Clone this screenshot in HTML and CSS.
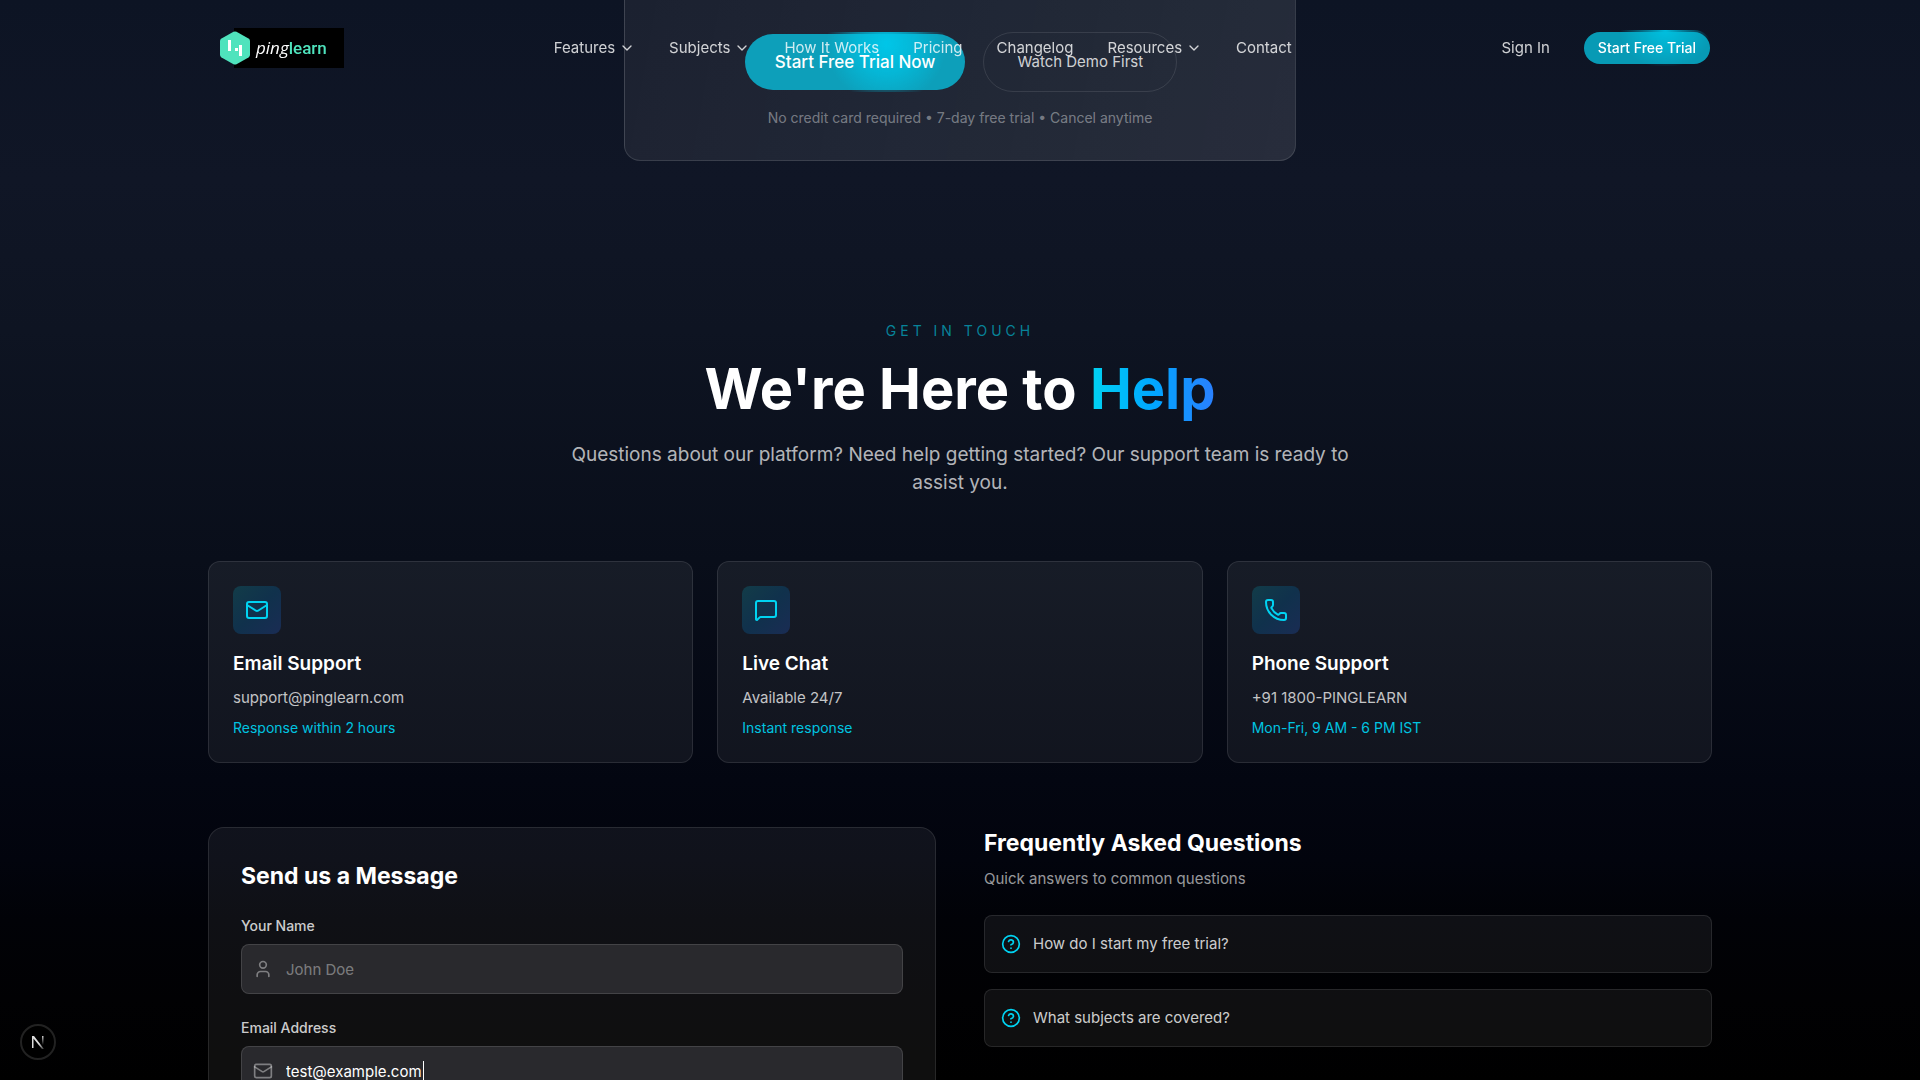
FILE: index.html
```html
<!DOCTYPE html>
<html lang="en">
<head>
<meta charset="utf-8">
<meta name="viewport" content="width=device-width, initial-scale=1">
<title>PingLearn</title>
<link rel="stylesheet" href="styles.css">
</head>
<body>
<header class="header">
  <div class="header-inner">
    <a class="logo" href="#" aria-label="PingLearn home">
      <svg class="logo-mark" viewBox="0 0 30 34" aria-hidden="true">
        <path d="M13.500.8Q15 0 16.500.8L28.500 7.600Q30 8.500 30 10V24Q30 25.500 28.500 26.400L16.500 33.200Q15 34 13.500 33.200L1.500 26.400Q0 25.500 0 24V10Q0 8.500 1.500 7.600Z" fill="#4fe3bd"/>
        <path d="M8 9h3v11h-3zM19 14h3v11h-3zM15 17h3v3h-3z" fill="#fff"/>
      </svg>
      <span class="logo-words"><span class="logo-ping">ping</span><span class="logo-learn">learn</span></span>
    </a>
    <nav class="nav" aria-label="Main">
      <a href="#">Features <svg class="icon chevron" viewBox="0 0 24 24" aria-hidden="true"><path d="m6 9 6 6 6-6"/></svg></a>
      <a href="#">Subjects <svg class="icon chevron" viewBox="0 0 24 24" aria-hidden="true"><path d="m6 9 6 6 6-6"/></svg></a>
      <a href="#">How It Works</a>
      <a href="#">Pricing</a>
      <a href="#">Changelog</a>
      <a href="#">Resources <svg class="icon chevron" viewBox="0 0 24 24" aria-hidden="true"><path d="m6 9 6 6 6-6"/></svg></a>
      <a href="#">Contact</a>
    </nav>
    <div class="account">
      <a class="sign-in" href="#">Sign In</a>
      <button class="btn btn-primary btn-small" type="button">Start Free Trial</button>
    </div>
  </div>
</header>

<main>
  <section class="cta">
    <div class="cta-card">
      <div class="cta-actions">
        <button class="btn btn-primary btn-large" type="button">Start Free Trial Now</button>
        <button class="btn btn-outline" type="button">Watch Demo First</button>
      </div>
      <p class="cta-note">No credit card required • 7-day free trial • Cancel anytime</p>
    </div>
  </section>

  <section class="contact">
    <div class="intro">
      <p class="eyebrow">GET IN TOUCH</p>
      <h1>We're Here to <span class="accent">Help</span></h1>
      <p class="lead">Questions about our platform? Need help getting started? Our support team is ready to assist you.</p>
    </div>

    <div class="channels">
      <article class="channel">
        <span class="channel-icon"><svg class="icon" viewBox="0 0 24 24" aria-hidden="true"><rect x="2" y="4" width="20" height="16" rx="2"/><path d="m22 7-8.991 5.727a2 2 0 0 1-2.009 0L2 7"/></svg></span>
        <h3>Email Support</h3>
        <p>support@pinglearn.com</p>
        <p class="channel-note">Response within 2 hours</p>
      </article>
      <article class="channel">
        <span class="channel-icon"><svg class="icon" viewBox="0 0 24 24" aria-hidden="true"><path d="M22 17a2 2 0 0 1-2 2H6.828a2 2 0 0 0-1.414.586l-2.202 2.202A.71.71 0 0 1 2 21.286V5a2 2 0 0 1 2-2h16a2 2 0 0 1 2 2z"/></svg></span>
        <h3>Live Chat</h3>
        <p>Available 24/7</p>
        <p class="channel-note">Instant response</p>
      </article>
      <article class="channel">
        <span class="channel-icon"><svg class="icon" viewBox="0 0 24 24" aria-hidden="true"><path d="M13.832 16.568a1 1 0 0 0 1.213-.303l.355-.465A2 2 0 0 1 17 15h3a2 2 0 0 1 2 2v3a2 2 0 0 1-2 2A18 18 0 0 1 2 4a2 2 0 0 1 2-2h3a2 2 0 0 1 2 2v3a2 2 0 0 1-.8 1.600l-.468.351a1 1 0 0 0-.292 1.233 14 14 0 0 0 6.392 6.384"/></svg></span>
        <h3>Phone Support</h3>
        <p>+91 1800-PINGLEARN</p>
        <p class="channel-note">Mon-Fri, 9 AM - 6 PM IST</p>
      </article>
    </div>

    <div class="columns">
      <form class="message">
        <h2>Send us a Message</h2>
        <div class="field">
          <label for="name">Your Name</label>
          <div class="control">
            <svg class="icon control-icon" viewBox="0 0 24 24" aria-hidden="true"><path d="M19 21v-2a4 4 0 0 0-4-4H9a4 4 0 0 0-4 4v2"/><circle cx="12" cy="7" r="4"/></svg>
            <input id="name" type="text" placeholder="John Doe">
          </div>
        </div>
        <div class="field">
          <label for="email">Email Address</label>
          <div class="control">
            <svg class="icon control-icon" viewBox="0 0 24 24" aria-hidden="true"><rect x="2" y="4" width="20" height="16" rx="2"/><path d="m22 7-8.991 5.727a2 2 0 0 1-2.009 0L2 7"/></svg>
            <input id="email" type="email" value="test@example.com">
            <span class="caret"></span>
          </div>
        </div>
      </form>

      <div class="faq">
        <h2>Frequently Asked Questions</h2>
        <p class="faq-lead">Quick answers to common questions</p>
        <div class="faq-list">
          <button class="question" type="button"><svg class="icon" viewBox="0 0 24 24" aria-hidden="true"><circle cx="12" cy="12" r="10"/><path d="M9.090 9a3 3 0 0 1 5.830 1c0 2-3 3-3 3"/><path d="M12 17h.01"/></svg>How do I start my free trial?</button>
          <button class="question" type="button"><svg class="icon" viewBox="0 0 24 24" aria-hidden="true"><circle cx="12" cy="12" r="10"/><path d="M9.090 9a3 3 0 0 1 5.830 1c0 2-3 3-3 3"/><path d="M12 17h.01"/></svg>What subjects are covered?</button>
        </div>
      </div>
    </div>
  </section>
</main>

<button class="dev-badge" type="button" aria-label="Developer tools">
  <svg viewBox="0 0 12 14" aria-hidden="true">
    <defs>
      <linearGradient id="diag" x1="0" y1="0" x2="1" y2="1"><stop offset=".6" stop-color="#ddd"/><stop offset="1" stop-color="#ddd" stop-opacity=".2"/></linearGradient>
      <linearGradient id="stem" x1="0" y1="0" x2="0" y2="1"><stop offset="0" stop-color="#ccc"/><stop offset="1" stop-color="#ccc" stop-opacity="0"/></linearGradient>
    </defs>
    <path d="M0 13V1h2l10 13h-2L1.500 3.500V13z" fill="url(#diag)"/>
    <rect x="10" y="1" width="1.500" height="9" fill="url(#stem)"/>
  </svg>
</button>
</body>
</html>
```
FILE: styles.css
```css
* { box-sizing: border-box; }

body {
  margin: 0;
  min-height: 100vh;
  font-family: Inter, "Open Sans", sans-serif;
  font-size: 15px;
  line-height: 24px;
  color: #fff;
  background: #000 linear-gradient(180deg, #0d1424 0, #101626 180px, #0e1422 330px, #090e1a 560px, #030611 780px, #02040d 860px, #010207 920px, #010103 1000px, #000 1080px) no-repeat;
}

h1, h2, h3, p { margin: 0; }
a { color: inherit; text-decoration: none; }
button, input { font: inherit; color: inherit; }

.icon {
  width: 24px;
  height: 24px;
  flex: none;
  fill: none;
  stroke: currentColor;
  stroke-width: 2;
  stroke-linecap: round;
  stroke-linejoin: round;
}

/* Header */
.header {
  position: fixed;
  top: 0;
  left: 0;
  right: 0;
  z-index: 10;
}
.header-inner {
  display: flex;
  align-items: center;
  justify-content: space-between;
  max-width: 1536px;
  height: 96px;
  margin: 0 auto;
  padding: 0 16px 0 28px;
}
.logo {
  display: flex;
  align-items: center;
  height: 40px;
  background: linear-gradient(#000, #000) 14px 0 no-repeat;
}
.logo-mark { width: 30px; height: 34px; }
.logo-words {
  display: flex;
  align-items: baseline;
  width: 94px;
  padding-left: 6px;
}
.logo-ping {
  font-family: "Open Sans", sans-serif;
  font-size: 17px;
  font-style: italic;
}
.logo-learn {
  font-family: "Liberation Sans Narrow", Roboto, sans-serif;
  font-size: 17px;
  font-weight: 500;
  color: #4fe3bd;
}
.nav { display: flex; gap: 34px; color: rgba(255, 255, 255, .8); }
.nav a { display: flex; align-items: center; gap: 4px; }
.chevron { width: 16px; height: 16px; }
.account { display: flex; align-items: center; gap: 32px; }
.sign-in { color: rgba(255, 255, 255, .8); }

/* Buttons */
.btn {
  border-radius: 30px;
  cursor: pointer;
  white-space: nowrap;
}
.btn-primary {
  border: 2px solid transparent;
  font-weight: 500;
  background:
    radial-gradient(circle at 64% 20%, #00c6e8, rgba(0, 198, 232, .6) 30px, rgba(0, 198, 232, 0) 60px) border-box,
    linear-gradient(#0d9fba, #0d9fba) padding-box;
}
.btn-small {
  height: 36px;
  padding: 0 14px;
  font-size: 14px;
  background:
    radial-gradient(ellipse 46px 38px at 64% 0, #00c0e0, rgba(0, 192, 224, 0)) border-box,
    linear-gradient(#079ab5, #079ab5) padding-box;
}
.btn-large {
  height: 60px;
  padding: 0 30px;
  font-size: 17px;
}
.btn-outline {
  height: 60px;
  padding: 0 33px;
  border: 1px solid rgba(255, 255, 255, .1);
  background: transparent;
  color: rgba(255, 255, 255, .8);
}

/* Call to action */
.cta { padding: 0 24px; }
.cta-card {
  display: flex;
  flex-direction: column;
  align-items: center;
  gap: 16px;
  max-width: 672px;
  margin: 0 auto;
  padding: 32px;
  border: 1px solid rgba(255, 255, 255, .12);
  border-top: 0;
  border-radius: 0 0 16px 16px;
  background: linear-gradient(100deg, rgba(255, 255, 255, .06), rgba(255, 255, 255, .1));
}
.cta-actions { display: flex; gap: 16px; }
.cta-note { font-size: 14px; line-height: 20px; color: rgba(255, 255, 255, .4); }

/* Contact */
.contact {
  max-width: 1552px;
  margin: 0 auto;
  padding: 160px 24px 96px;
}
.intro {
  max-width: 800px;
  margin: 0 auto 64px;
  text-align: center;
}
.eyebrow {
  font-size: 14px;
  line-height: 20px;
  letter-spacing: 4px;
  color: #078399;
}
h1 {
  margin: 16px 0 20px;
  font-size: 56px;
  line-height: 64px;
  font-weight: 700;
}
.accent {
  display: inline-block;
  color: transparent;
  background: linear-gradient(90deg, #00d3f2, #00a6ff 50%, #2b7fff);
  background-clip: text;
  -webkit-background-clip: text;
}
.lead { font-size: 19px; line-height: 28px; color: rgba(255, 255, 255, .7); }

.channels {
  display: grid;
  grid-template-columns: repeat(3, 1fr);
  gap: 24px;
  margin-bottom: 64px;
}
.channel {
  padding: 24px;
  border: 1px solid rgba(255, 255, 255, .1);
  border-radius: 12px;
  background: rgba(255, 255, 255, .06);
  color: rgba(255, 255, 255, .75);
}
.channel-icon {
  display: grid;
  place-items: center;
  width: 48px;
  height: 48px;
  margin-bottom: 16px;
  border-radius: 8px;
  background: linear-gradient(135deg, #123c48, #10314c 50%, #1a2c54);
  color: #00d3f2;
}
.channel h3 {
  margin-bottom: 8px;
  font-size: 19px;
  line-height: 28px;
  font-weight: 600;
  color: #fff;
}
.channel .channel-note {
  margin-top: 8px;
  font-size: 14px;
  line-height: 20px;
  color: #00c4e0;
}

.columns {
  display: grid;
  grid-template-columns: repeat(2, 1fr);
  gap: 48px;
}
h2 { font-size: 23px; line-height: 32px; font-weight: 700; }

.message {
  display: flex;
  flex-direction: column;
  gap: 24px;
  padding: 32px;
  border: 1px solid rgba(255, 255, 255, .1);
  border-radius: 16px;
  background: rgba(255, 255, 255, .06);
}
.field { display: grid; gap: 8px; }
.field label {
  font-size: 14px;
  line-height: 20px;
  font-weight: 500;
  color: rgba(255, 255, 255, .8);
}
.control { display: grid; align-items: center; }
.control > * { grid-area: 1 / 1; }
.control-icon {
  z-index: 1;
  width: 20px;
  height: 20px;
  margin-left: 12px;
  color: rgba(255, 255, 255, .4);
}
.control input {
  width: 100%;
  height: 50px;
  padding: 0 16px 0 44px;
  border: 1px solid rgba(255, 255, 255, .12);
  border-radius: 8px;
  outline: 0;
  background: #29292d;
}
.control input::placeholder { color: rgba(255, 255, 255, .4); }
.caret {
  width: 1px;
  height: 20px;
  margin-left: 182px;
  background: #fff;
}

.faq-lead { margin: 8px 0 24px; color: rgba(255, 255, 255, .6); }
.faq-list { display: grid; gap: 16px; }
.question {
  display: flex;
  align-items: center;
  gap: 12px;
  padding: 16px;
  border: 1px solid rgba(255, 255, 255, .1);
  border-radius: 8px;
  background: rgba(255, 255, 255, .06);
  color: rgba(255, 255, 255, .8);
  text-align: left;
  cursor: pointer;
}
.question .icon { width: 20px; height: 20px; color: #00d3f2; }

/* Floating badge */
.dev-badge {
  position: fixed;
  left: 20px;
  bottom: 20px;
  display: grid;
  place-items: center;
  width: 36px;
  height: 36px;
  padding: 0;
  border: 2px solid #222;
  border-radius: 50%;
  background: #000;
}
.dev-badge svg { width: 12px; height: 14px; }
```
